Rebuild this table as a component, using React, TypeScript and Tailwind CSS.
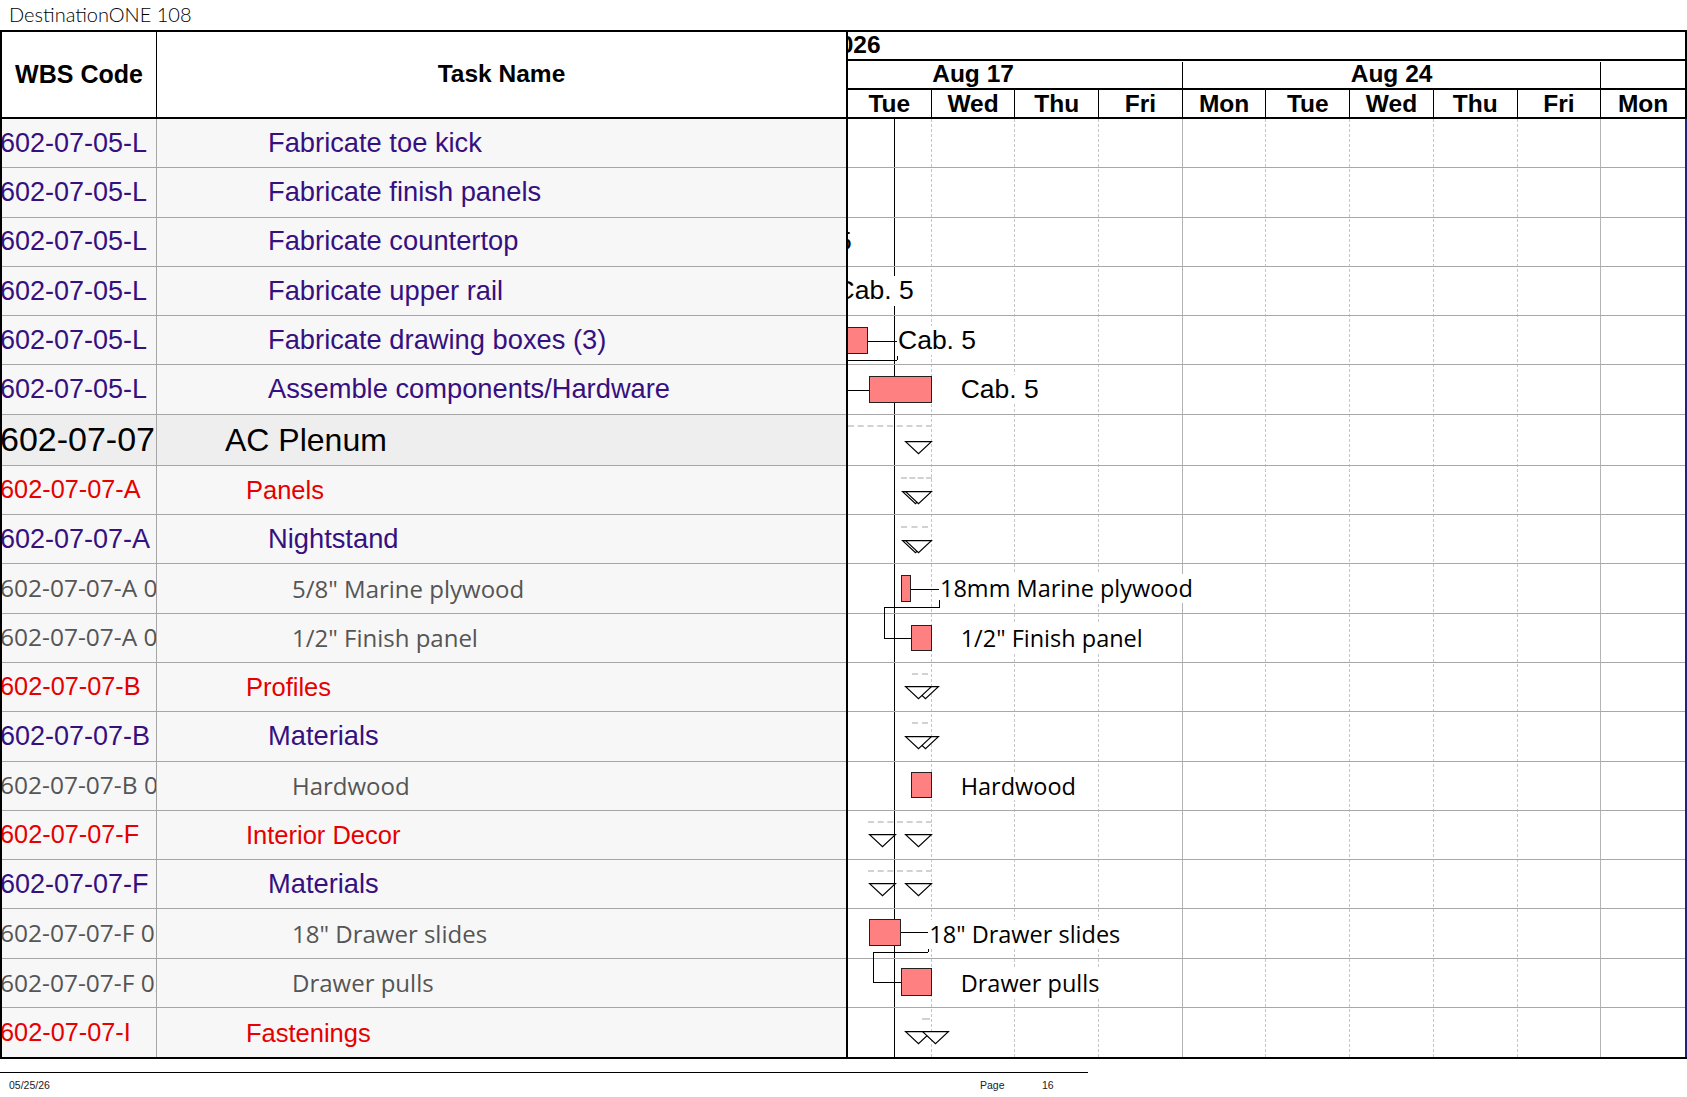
import React from "react";

type Kind = "task" | "group" | "top" | "item";

type Shape =
  | { t: "bar"; x: number; y: number; w: number; h: number }
  | { t: "h"; x: number; y: number; w: number }
  | { t: "v"; x: number; y: number; h: number }
  | { t: "tri"; x: number; y: number }
  | { t: "dash"; x: number; y: number; w: number }
  | { t: "cab"; x: number }
  | { t: "lbl"; x: number; text: string };

const rows: { code: string; name: string; kind: Kind; g: Shape[] }[] = [
  { code: "602-07-05-L", name: "Fabricate toe kick", kind: "task", g: [] },
  { code: "602-07-05-L", name: "Fabricate finish panels", kind: "task", g: [] },
  { code: "602-07-05-L", name: "Fabricate countertop", kind: "task", g: [{ t: "cab", x: -74.4 }] },
  { code: "602-07-05-L", name: "Fabricate upper rail", kind: "task", g: [{ t: "cab", x: -12.4 }] },
  {
    code: "602-07-05-L",
    name: "Fabricate drawing boxes (3)",
    kind: "task",
    g: [
      { t: "bar", x: -40, y: 11.1, w: 60.3, h: 26.6 },
      { t: "h", x: 20.3, y: 24.4, w: 29 },
      { t: "h", x: -10, y: 43.4, w: 59.3 },
      { t: "v", x: 49.3, y: 39.4, h: 4 },
      { t: "cab", x: 50 },
    ],
  },
  {
    code: "602-07-05-L",
    name: "Assemble components/Hardware",
    kind: "task",
    g: [
      { t: "h", x: 0, y: 24.3, w: 21.3 },
      { t: "bar", x: 21.3, y: 10.7, w: 62.4, h: 26.6 },
      { t: "cab", x: 112.7 },
    ],
  },
  {
    code: "602-07-07",
    name: "AC Plenum",
    kind: "top",
    g: [
      { t: "dash", x: 0, y: 10.3, w: 84 },
      { t: "tri", x: 57, y: 26.3 },
    ],
  },
  {
    code: "602-07-07-A",
    name: "Panels",
    kind: "group",
    g: [
      { t: "dash", x: 53, y: 10.8, w: 31 },
      { t: "tri", x: 53.7, y: 25.1 },
      { t: "tri", x: 57.3, y: 25.1 },
    ],
  },
  {
    code: "602-07-07-A",
    name: "Nightstand",
    kind: "task",
    g: [
      { t: "dash", x: 53, y: 10.7, w: 27 },
      { t: "tri", x: 53.7, y: 24.7 },
      { t: "tri", x: 57.3, y: 24.7 },
    ],
  },
  {
    code: "602-07-07-A 01",
    name: '5/8" Marine plywood',
    kind: "item",
    g: [
      { t: "bar", x: 53, y: 10.3, w: 9.7, h: 27.3 },
      { t: "h", x: 62.7, y: 24.3, w: 28.3 },
      { t: "v", x: 91, y: 35.3, h: 7.3 },
      { t: "h", x: 36.3, y: 42.6, w: 55.7 },
      { t: "v", x: 36.3, y: 42.6, h: 31 },
      { t: "h", x: 36.3, y: 73.6, w: 27 },
      { t: "lbl", x: 92, text: "18mm Marine plywood" },
    ],
  },
  {
    code: "602-07-07-A 02",
    name: '1/2" Finish panel',
    kind: "item",
    g: [
      { t: "bar", x: 63, y: 11.6, w: 20.7, h: 25.3 },
      { t: "lbl", x: 112.7, text: '1/2" Finish panel' },
    ],
  },
  {
    code: "602-07-07-B",
    name: "Profiles",
    kind: "group",
    g: [
      { t: "dash", x: 64, y: 10.5, w: 16 },
      { t: "tri", x: 64, y: 23.2 },
      { t: "tri", x: 57, y: 23.2 },
    ],
  },
  {
    code: "602-07-07-B",
    name: "Materials",
    kind: "task",
    g: [
      { t: "dash", x: 64, y: 9.4, w: 16 },
      { t: "tri", x: 64, y: 24.1 },
      { t: "tri", x: 57, y: 24.1 },
    ],
  },
  {
    code: "602-07-07-B 01",
    name: "Hardwood",
    kind: "item",
    g: [
      { t: "bar", x: 63, y: 10, w: 20.7, h: 26.7 },
      { t: "lbl", x: 112.7, text: "Hardwood" },
    ],
  },
  {
    code: "602-07-07-F",
    name: "Interior Decor",
    kind: "group",
    g: [
      { t: "dash", x: 20, y: 10, w: 64 },
      { t: "tri", x: 21, y: 23.3 },
      { t: "tri", x: 57, y: 23.3 },
    ],
  },
  {
    code: "602-07-07-F",
    name: "Materials",
    kind: "task",
    g: [
      { t: "dash", x: 20, y: 9.6, w: 64 },
      { t: "tri", x: 21, y: 23.2 },
      { t: "tri", x: 57, y: 23.2 },
    ],
  },
  {
    code: "602-07-07-F 01",
    name: '18" Drawer slides',
    kind: "item",
    g: [
      { t: "bar", x: 21.3, y: 9.5, w: 31.4, h: 27.3 },
      { t: "h", x: 52.7, y: 22.8, w: 27.6 },
      { t: "v", x: 80.3, y: 39.5, h: 2.7 },
      { t: "h", x: 25.3, y: 42.2, w: 55 },
      { t: "v", x: 25.3, y: 42.2, h: 30.6 },
      { t: "h", x: 25.3, y: 72.8, w: 28 },
      { t: "lbl", x: 81.3, text: '18" Drawer slides' },
    ],
  },
  {
    code: "602-07-07-F 02",
    name: "Drawer pulls",
    kind: "item",
    g: [
      { t: "bar", x: 53.3, y: 9.1, w: 30.4, h: 27.7 },
      { t: "lbl", x: 112.7, text: "Drawer pulls" },
    ],
  },
  {
    code: "602-07-07-I",
    name: "Fastenings",
    kind: "group",
    g: [
      { t: "dash", x: 73.7, y: 9.7, w: 8.3 },
      { t: "tri", x: 57, y: 23 },
      { t: "tri", x: 73.7, y: 23 },
    ],
  },
];

const codeStyle: Record<Kind, string> = {
  task: "font-['Liberation_Sans',Arial,sans-serif] text-[27px] text-[#36107f]",
  group: "font-['Liberation_Sans',Arial,sans-serif] text-[25.3px] text-[#e60000]",
  top: "font-['Liberation_Sans',Arial,sans-serif] text-[34px] text-black",
  item: "font-['Open_Sans',sans-serif] text-[24.5px] text-[#555555]",
};

const nameStyle: Record<Kind, string> = {
  task: "pl-[111px] font-['Liberation_Sans',Arial,sans-serif] text-[27.3px] text-[#36107f]",
  group: "pl-[89px] font-['Liberation_Sans',Arial,sans-serif] text-[25.5px] text-[#e60000]",
  top: "pl-[68px] font-['Liberation_Sans',Arial,sans-serif] text-[32px] text-black",
  item: "pl-[135px] font-['Open_Sans',sans-serif] text-[24px] text-[#555555]",
};

const days = ["Tue", "Wed", "Thu", "Fri", "Mon", "Tue", "Wed", "Thu", "Fri", "Mon"];

function Tri({ x, y }: { x: number; y: number }) {
  return (
    <svg className="absolute overflow-visible" style={{ left: x, top: y }} width={27} height={13}>
      <polygon points="0.6,0.6 26.4,0.6 13.5,12.6" fill="white" stroke="black" strokeWidth={1.2} />
    </svg>
  );
}

function GanttShape({ s }: { s: Shape }) {
  switch (s.t) {
    case "bar":
      return (
        <div
          className="absolute bg-[#ff8080] border border-[#222]"
          style={{ left: s.x, top: s.y, width: s.w, height: s.h }}
        />
      );
    case "h":
      return <div className="absolute h-[1.2px] bg-black" style={{ left: s.x, top: s.y, width: s.w }} />;
    case "v":
      return <div className="absolute w-[1.2px] bg-black" style={{ left: s.x, top: s.y, height: s.h }} />;
    case "tri":
      return <Tri x={s.x} y={s.y} />;
    case "dash":
      return (
        <div
          className="absolute h-0 border-t-2 border-dashed border-[#d2d2d2]"
          style={{ left: s.x, top: s.y, width: s.w }}
        />
      );
    case "cab":
      return (
        <div className="absolute inset-y-0 flex items-center" style={{ left: s.x }}>
          <span className="bg-white leading-[1.1] whitespace-nowrap font-['Liberation_Sans',Arial,sans-serif] text-[26.5px] text-black">
            Cab. 5
          </span>
        </div>
      );
    case "lbl":
      return (
        <div className="absolute inset-y-0 flex items-center" style={{ left: s.x }}>
          <span className="bg-white leading-[1.2] whitespace-nowrap font-['Open_Sans',sans-serif] text-[23.5px] text-black">
            {s.text}
          </span>
        </div>
      );
  }
}

export default function App() {
  return (
    <div className="w-[1687px] h-[1097px] bg-white overflow-hidden font-['Liberation_Sans',Arial,sans-serif]">
      <div className="h-[30px] pl-[9px] pt-[2px] leading-[24px] text-[20px] font-light text-black font-['Lato',sans-serif]">
        DestinationONE 108
      </div>

      <div className="flex border-t-2 border-b-2 border-black">
        {/* task table */}
        <div className="w-[848px] shrink-0 border-l-2 border-r-2 border-black">
          <div className="h-[87px] flex border-b-2 border-black bg-white">
            <div className="w-[155px] shrink-0 border-r border-black flex items-center justify-center font-bold text-[25px]">
              WBS Code
            </div>
            <div className="flex-1 flex items-center justify-center font-bold text-[24.5px]">Task Name</div>
          </div>
          {rows.map((r, i) => (
            <div
              key={i}
              className={`flex border-b border-[#a6a6a6] last:border-b-0 ${
                r.kind === "top" ? "h-[51px] bg-[#eeeeee]" : "h-[49.3px] bg-[#f7f7f7]"
              }`}
            >
              <div className="w-[155px] shrink-0 border-r border-[#a6a6a6] overflow-hidden whitespace-nowrap flex items-center">
                <span className={`-ml-[2px] ${codeStyle[r.kind]}`}>{r.code}</span>
              </div>
              <div className={`flex-1 flex items-center whitespace-nowrap overflow-hidden ${nameStyle[r.kind]}`}>
                {r.name}
              </div>
            </div>
          ))}
        </div>

        {/* gantt */}
        <div className="w-[839px] shrink-0 overflow-hidden">
          <div className="h-[87px] border-b-2 border-r-2 border-black font-bold text-[24.5px] text-black">
            <div className="h-[28.5px] border-b-2 border-black flex items-center">
              <span className="-ml-[22px]">2026</span>
            </div>
            <div className="h-[29px] border-b-2 border-black flex pt-[1px]">
              <div className="w-[334.8px] shrink-0 border-r-[1.5px] border-black flex items-center justify-center pr-[83.7px]">
                Aug 17
              </div>
              <div className="w-[418.5px] shrink-0 border-r-[1.5px] border-black flex items-center justify-center">
                Aug 24
              </div>
              <div className="flex-1" />
            </div>
            <div className="h-[27.5px] flex">
              {days.map((d, i) => (
                <div
                  key={i}
                  className={`flex items-center justify-center pt-[3px] ${
                    i === days.length - 1 ? "flex-1" : "w-[83.7px] shrink-0 border-r-[1.5px] border-black"
                  }`}
                >
                  {d}
                </div>
              ))}
            </div>
          </div>

          <div className="relative border-r-2 border-[#22227a]">
            <div className="absolute inset-0 flex">
              {days.map((_, i) => (
                <div
                  key={i}
                  className={
                    i === 3 || i === 8
                      ? "w-[83.7px] shrink-0 border-r border-[#b4b4b4]"
                      : i === 9
                      ? "flex-1"
                      : "w-[83.7px] shrink-0 border-r border-dashed border-[#c6c6c6]"
                  }
                />
              ))}
            </div>
            <div className="absolute top-0 bottom-0 left-[45.6px] w-[1.5px] bg-black" />
            {rows.map((r, i) => (
              <div
                key={i}
                className={`relative border-b border-[#a8a8a8] last:border-b-0 ${
                  r.kind === "top" ? "h-[51px]" : "h-[49.3px]"
                }`}
              >
                {r.g.map((s, j) => (
                  <GanttShape key={j} s={s} />
                ))}
              </div>
            ))}
          </div>
        </div>
      </div>

      <div className="mt-[13px] w-[1088px] border-t border-black" />
      <div className="flex mt-[6px] leading-[12px] text-[10.5px] text-[#222]">
        <span className="w-[980px] shrink-0 pl-[9px]">05/25/26</span>
        <span className="w-[62px] shrink-0">Page</span>
        <span>16</span>
      </div>
    </div>
  );
}
